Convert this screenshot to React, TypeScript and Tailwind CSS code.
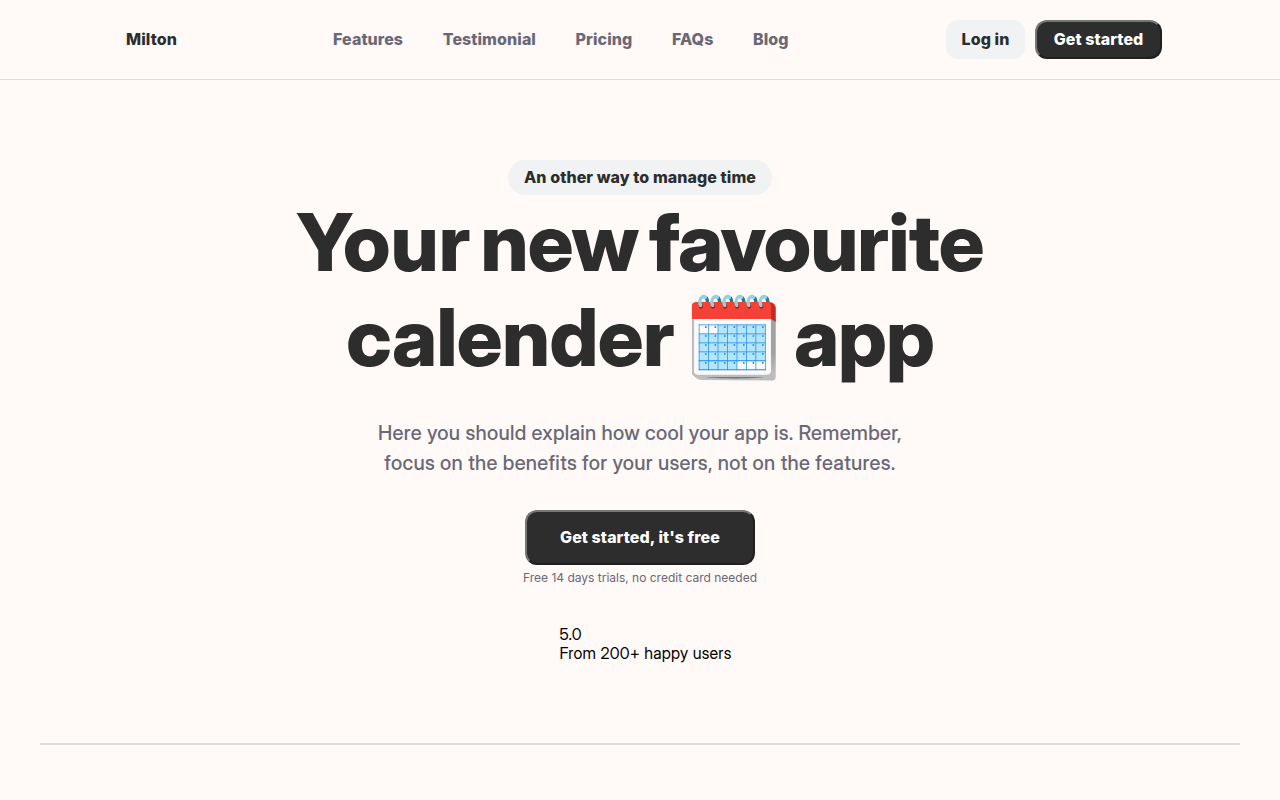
export default function App() {
  return (
    <div className="h-[800px] overflow-hidden bg-[#fff9f7] font-['Inter_Display','Inter',sans-serif] text-base leading-[19px] text-black">
      <header className="flex h-20 items-center border-b border-[#dedddd] pr-[118px] pb-px pl-[126px] font-['Inter',sans-serif] font-extrabold tracking-[0.08px] text-[#2d2d2d]">
        <a className="w-[207px]">Milton</a>
        <nav className="flex flex-1 gap-[39.6px] text-[#6a6876]">
          <a>Features</a><a>Testimonial</a><a>Pricing</a><a>FAQs</a><a>Blog</a>
        </nav>
        <div className="flex gap-2.5">
          <button className="h-[39px] w-[79px] rounded-xl bg-[#f0f2f4]">Log in</button>
          <button className="h-[39px] w-[127px] rounded-xl border-2 border-t-[#767676] border-r-[#202020] border-b-[#202020] border-l-[#767676] bg-[#2d2d2d] text-white">Get started</button>
        </div>
      </header>
      <main className="flex flex-col items-center pt-20">
        <div className="flex h-[35px] w-[264px] items-center justify-center rounded-full bg-[#f0f2f4] font-['Inter',sans-serif] font-extrabold tracking-[0.08px] text-[#2d2d2d]">An other way to manage time</div>
        <h1 className="-mt-px text-center text-[80px] leading-[95px] font-extrabold tracking-[-1px] text-[#2d2d2d] [word-spacing:-4.5px]"><span className="tracking-normal">Your</span> new favourite<br /><span className="tracking-[-0.6px]">calender</span> 🗓️ app</h1>
        <p className="mt-[34px] text-center text-xl leading-[30px] font-medium tracking-[0.3px] text-[#6a6876]">Here you should explain how cool your app is. Remember,<br />focus on the benefits for your users, not on the features.</p>
        <button className="mt-8 h-[55px] w-[230px] rounded-xl border-2 border-t-[#767676] border-r-[#202020] border-b-[#202020] border-l-[#767676] bg-[#2d2d2d] font-['Inter',sans-serif] font-extrabold tracking-[0.08px] text-white">Get started, it's free</button>
        <p className="mt-[5px] font-['Inter',sans-serif] text-xs leading-4 text-[#6a6876]">Free 14 days trials, no credit card needed</p>
        <div className="mt-[39px] ml-[11px] tracking-[0.24px]"><p>5.0</p><p>From 200+ happy users</p></div>
      </main>
      <hr className="mx-10 mt-20 border-t-2 border-[#dedddd]" />
    </div>
  );
}
